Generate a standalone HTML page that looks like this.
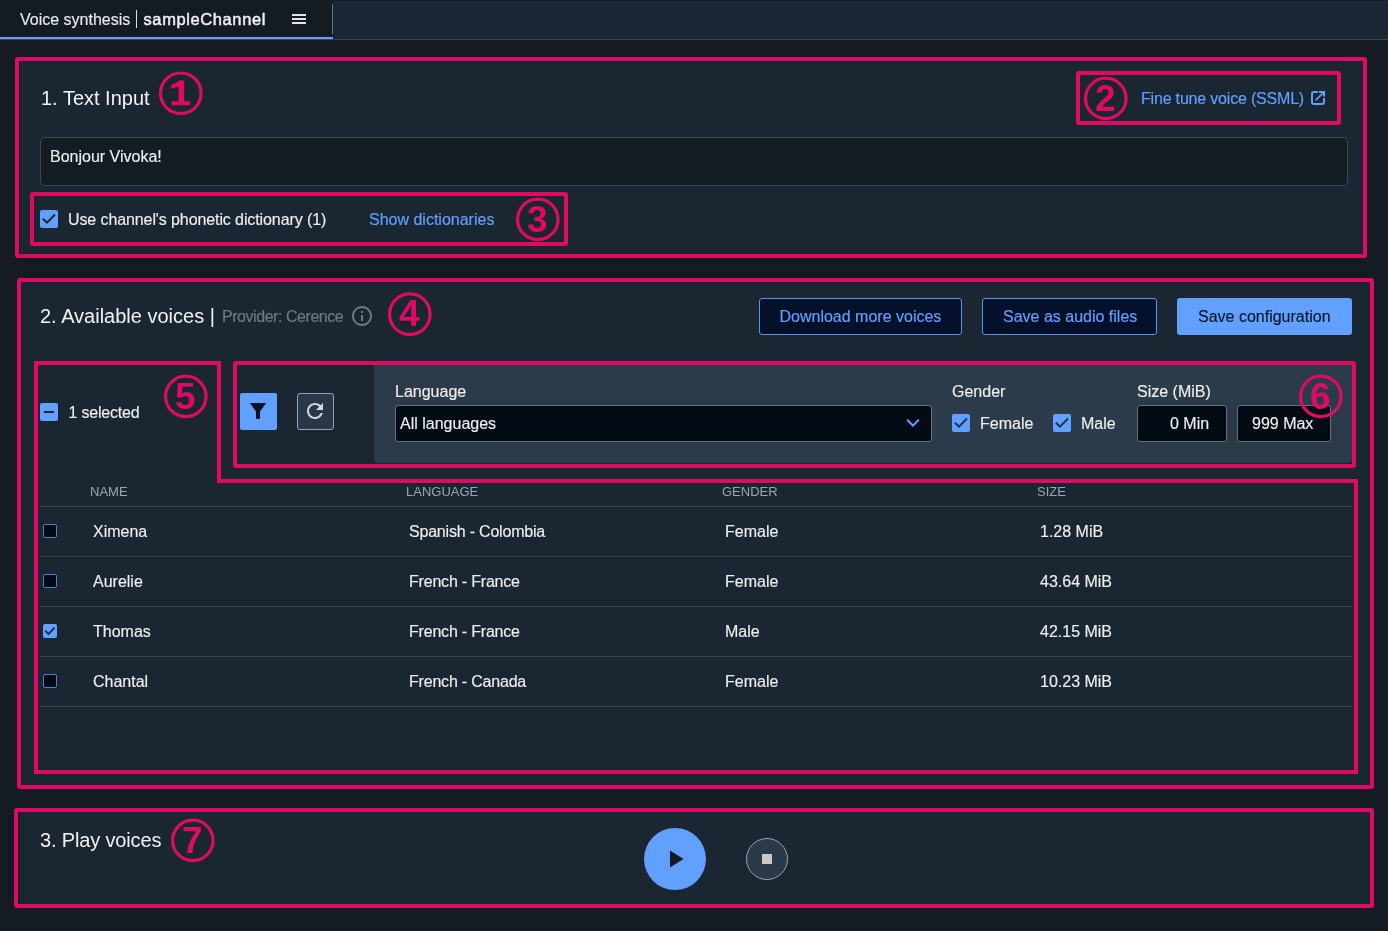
<!DOCTYPE html>
<html><head><meta charset="utf-8">
<style>
*{box-sizing:border-box;margin:0;padding:0}
html,body{width:1388px;height:931px;overflow:hidden;background:#141b23;font-family:"Liberation Sans",sans-serif;color:#eeeeee}
.a{position:absolute}
.t{position:absolute;white-space:nowrap;line-height:1;font-size:16px;-webkit-text-stroke:0.15px currentColor}
.t20{font-size:20px;color:#f2f2f2;-webkit-text-stroke:0}
.pk{position:absolute;border:4px solid #df0a64;border-radius:3px}
.panel{position:absolute;background:#1b2633}
.cb{position:absolute;width:18px;height:18px;background:#62a0ff;border-radius:2px}
.tcb{position:absolute;width:14px;height:14px;border:1.5px solid #4d7fcc;background:#030a12;border-radius:2px}
.tcbc{position:absolute;width:14px;height:14px;background:#62a0ff;border-radius:2px}
.div{position:absolute;left:40px;width:1312px;height:1px;background:#37434f}
.th{position:absolute;white-space:nowrap;line-height:1;font-size:13px;color:#9da6ae}
.num{position:absolute}
</style></head><body>
<div id="root" style="position:absolute;left:0;top:0;width:1388px;height:931px;will-change:transform">

<!-- top tab bar -->
<div class="a" style="left:333px;top:1px;width:1055px;height:38px;background:#1a2633"></div>
<div class="a" style="left:0;top:39px;width:1388px;height:1px;background:#3c4753"></div>
<div class="a" style="left:0;top:37px;width:333px;height:2px;background:#62a0ff"></div>
<div class="a" style="left:332px;top:4px;width:1px;height:30px;background:#6b7580"></div>
<div class="t" style="left:20px;top:12px;color:#e8e8e8">Voice synthesis</div>
<div class="a" style="left:136px;top:10px;width:1px;height:18px;background:#e0e0e0"></div>
<div class="t" style="left:143.5px;top:11.3px;font-size:16.5px;letter-spacing:0.6px;-webkit-text-stroke:0.45px #f2f2f2;color:#f2f2f2">sampleChannel</div>
<div class="a" style="left:292px;top:14px;width:14px;height:2px;background:#e4e4e4"></div>
<div class="a" style="left:292px;top:18px;width:14px;height:2px;background:#e4e4e4"></div>
<div class="a" style="left:292px;top:22px;width:14px;height:2px;background:#e4e4e4"></div>

<!-- SECTION 1 -->
<div class="panel" style="left:20px;top:57px;width:1347px;height:201px"></div>
<div class="t t20" style="left:41px;top:88px">1. Text Input</div>
<div class="t" style="left:1141px;top:91px;letter-spacing:-0.19px;color:#62a0ff">Fine tune voice (SSML)</div>
<svg class="a" style="left:1306px;top:86px" width="24" height="24"><path d="M12 6 H8 Q6 6 6 8 V16 Q6 18 8 18 H16 Q18 18 18 16 V12" fill="none" stroke="#62a0ff" stroke-width="2"/><path d="M13 5 H19 V10.6 H17 V7 H13 Z" fill="#62a0ff"/><path d="M18 6 L9.6 14.4" stroke="#62a0ff" stroke-width="1.7"/></svg>
<div class="a" style="left:40px;top:137px;width:1308px;height:49px;background:#131b23;border:1px solid #3c4856;border-radius:5px"></div>
<div class="t" style="left:50px;top:149px;color:#eeeeee">Bonjour Vivoka!</div>
<div class="cb" style="left:40px;top:210px"><svg width="18" height="18" class="a" style="left:0;top:0"><path d="M2.8 8.7 L7 12.6 L15 4.5" fill="none" stroke="#1b2633" stroke-width="2"/></svg></div>
<div class="t" style="left:68px;top:212px;letter-spacing:-0.1px">Use channel's phonetic dictionary (1)</div>
<div class="t" style="left:369px;top:212px;color:#62a0ff">Show dictionaries</div>

<!-- SECTION 2 -->
<div class="panel" style="left:20px;top:278px;width:1354px;height:511px"></div>
<div class="t t20" style="left:40px;top:306px">2. Available voices |</div>
<div class="t" style="left:222px;top:309px;letter-spacing:-0.45px;color:#6e7a86">Provider: Cerence</div>
<svg class="a" style="left:350px;top:304px" width="24" height="24" viewBox="0 0 24 24"><path fill="#6b7885" d="M11 7h2v2h-2zm0 4h2v6h-2zm1-9C6.48 2 2 6.48 2 12s4.48 10 10 10 10-4.48 10-10S17.52 2 12 2zm0 18c-4.41 0-8-3.59-8-8s3.59-8 8-8 8 3.59 8 8-3.59 8-8 8z"/></svg>

<div class="a" style="left:759px;top:298px;width:203px;height:37px;background:#05112a;border:1px solid #5a94ec;border-radius:3px"></div>
<div class="t" style="left:779.5px;top:309px;color:#62a0ff">Download more voices</div>
<div class="a" style="left:982px;top:298px;width:175px;height:37px;background:#05112a;border:1px solid #5a94ec;border-radius:3px"></div>
<div class="t" style="left:1003px;top:309px;color:#62a0ff">Save as audio files</div>
<div class="a" style="left:1177px;top:298px;width:175px;height:37px;background:#62a0ff;border-radius:3px"></div>
<div class="t" style="left:1198px;top:309px;color:#0b1726">Save configuration</div>

<!-- selection -->
<div class="cb" style="left:40px;top:403px"><div class="a" style="left:4px;top:8px;width:10px;height:2px;background:#1b2633"></div></div>
<div class="t" style="left:68.5px;top:405px;letter-spacing:-0.2px">1 selected</div>

<!-- filter -->
<div class="a" style="left:240px;top:393px;width:37px;height:37px;background:#62a0ff;border-radius:2px">
<svg class="a" style="left:0;top:0" width="37" height="37"><path fill="#06122a" d="M10.5 10 L25.5 10 Q26.2 10 25.8 10.6 L20 18.5 L20 25 Q20 26 19 26 L17 26 Q16 26 16 25 L16 18.5 L10.2 10.6 Q9.8 10 10.5 10 Z"/></svg></div>
<div class="a" style="left:297px;top:393px;width:37px;height:37px;background:#283848;border:1px solid #9aa4ae;border-radius:3px">
<svg class="a" style="left:5px;top:5px" width="24" height="24" viewBox="0 0 24 24"><path fill="#d8d8d8" d="M17.65 6.35C16.2 4.9 14.21 4 12 4c-4.42 0-7.99 3.58-7.99 8s3.57 8 7.99 8c3.73 0 6.84-2.55 7.730-6h-2.08c-.82 2.33-3.04 4-5.65 4-3.31 0-6-2.69-6-6s2.69-6 6-6c1.66 0 3.14.69 4.22 1.780L13 11h7V4l-2.35 2.35z"/></svg></div>
<div class="a" style="left:374px;top:365px;width:978px;height:98px;background:#2b3b4a;border-radius:0 0 4px 4px"></div>
<div class="t" style="left:395px;top:384px">Language</div>
<div class="a" style="left:395px;top:405px;width:537px;height:37px;background:#030b14;border:1px solid #66717b;border-radius:3px"></div>
<div class="t" style="left:400px;top:416px">All languages</div>
<svg class="a" style="left:905px;top:417px" width="16" height="12"><path d="M2.7 3.3 L8 8.6 L13.3 3.3" fill="none" stroke="#62a0ff" stroke-width="2" stroke-linecap="round"/></svg>
<div class="t" style="left:952px;top:384px">Gender</div>
<div class="cb" style="left:952px;top:414px"><svg width="18" height="18" class="a" style="left:0;top:0"><path d="M2.8 8.7 L7 12.6 L15 4.5" fill="none" stroke="#263442" stroke-width="2"/></svg></div>
<div class="t" style="left:980px;top:416px">Female</div>
<div class="cb" style="left:1053px;top:414px"><svg width="18" height="18" class="a" style="left:0;top:0"><path d="M2.8 8.7 L7 12.6 L15 4.5" fill="none" stroke="#263442" stroke-width="2"/></svg></div>
<div class="t" style="left:1081px;top:416px">Male</div>
<div class="t" style="left:1137px;top:384px">Size (MiB)</div>
<div class="a" style="left:1137px;top:405px;width:90px;height:37px;background:#030b14;border:1px solid #66717b;border-radius:3px"></div>
<div class="t" style="left:1170px;top:416px">0 Min</div>
<div class="a" style="left:1237px;top:405px;width:94px;height:37px;background:#030b14;border:1px solid #66717b;border-radius:3px"></div>
<div class="t" style="left:1252px;top:416px">999 Max</div>

<!-- table -->
<div class="th" style="left:90px;top:485px">NAME</div>
<div class="th" style="left:406px;top:485px">LANGUAGE</div>
<div class="th" style="left:722px;top:485px">GENDER</div>
<div class="th" style="left:1037px;top:485px">SIZE</div>
<div class="div" style="top:506px"></div>
<div class="div" style="top:556px"></div>
<div class="div" style="top:606px"></div>
<div class="div" style="top:656px"></div>
<div class="div" style="top:706px"></div>

<div class="tcb" style="left:43px;top:524px"></div>
<div class="t" style="left:93px;top:524px">Ximena</div>
<div class="t" style="left:409px;top:524px;letter-spacing:-0.2px">Spanish - Colombia</div>
<div class="t" style="left:725px;top:524px">Female</div>
<div class="t" style="left:1040px;top:524px">1.28 MiB</div>

<div class="tcb" style="left:43px;top:574px"></div>
<div class="t" style="left:93px;top:574px">Aurelie</div>
<div class="t" style="left:409px;top:574px;letter-spacing:-0.2px">French - France</div>
<div class="t" style="left:725px;top:574px">Female</div>
<div class="t" style="left:1040px;top:574px">43.64 MiB</div>

<div class="tcbc" style="left:43px;top:624px"><svg width="14" height="14" class="a" style="left:0;top:0"><path d="M2.3 6.6 L5.5 10.1 L11.6 3.7" fill="none" stroke="#1b2633" stroke-width="1.7"/></svg></div>
<div class="t" style="left:93px;top:624px">Thomas</div>
<div class="t" style="left:409px;top:624px;letter-spacing:-0.2px">French - France</div>
<div class="t" style="left:725px;top:624px">Male</div>
<div class="t" style="left:1040px;top:624px">42.15 MiB</div>

<div class="tcb" style="left:43px;top:674px"></div>
<div class="t" style="left:93px;top:674px">Chantal</div>
<div class="t" style="left:409px;top:674px;letter-spacing:-0.2px">French - Canada</div>
<div class="t" style="left:725px;top:674px">Female</div>
<div class="t" style="left:1040px;top:674px">10.23 MiB</div>

<!-- SECTION 3 -->
<div class="panel" style="left:20px;top:808px;width:1354px;height:100px"></div>
<div class="t t20" style="left:40px;top:830px;letter-spacing:-0.15px">3. Play voices</div>
<div class="a" style="left:644px;top:828px;width:62px;height:62px;border-radius:50%;background:#62a0ff"></div>
<svg class="a" style="left:644px;top:828px" width="62" height="62"><path d="M26 22.5 L39.5 31 L26 39.5 Z" fill="#111a22"/></svg>
<div class="a" style="left:746px;top:838px;width:42px;height:42px;border-radius:50%;background:#2a3a49;border:1px solid #9aa0a6"></div>
<div class="a" style="left:762px;top:854px;width:10px;height:10px;background:#c8c8c8"></div>

<!-- pink annotation boxes -->
<div class="pk" style="left:15px;top:57px;width:1352px;height:201px"></div>
<div class="pk" style="left:1076px;top:71px;width:265px;height:54px"></div>
<div class="pk" style="left:30px;top:192px;width:538px;height:54px"></div>
<div class="pk" style="left:17px;top:278px;width:1357px;height:511px"></div>
<div class="pk" style="left:233px;top:361px;width:1123px;height:107px"></div>
<svg class="a" style="left:0;top:0" width="1388" height="931"><path d="M36 363 L219 363 L219 481 L1356 481 L1356 772 L36 772 Z" fill="none" stroke="#df0a64" stroke-width="4" stroke-linejoin="miter"/></svg>
<div class="pk" style="left:14px;top:808px;width:1360px;height:100px"></div>

<!-- circled numbers -->
<svg class="a" style="left:0;top:0" width="1388" height="931">
<g fill="none" stroke="#df0a64" stroke-width="3.2">
<circle cx="180.8" cy="93.25" r="20.25"/>
<circle cx="1105.8" cy="98.4" r="20.25"/>
<circle cx="537.8" cy="219.4" r="20.25"/>
<circle cx="409.8" cy="314.2" r="20.25"/>
<circle cx="185.8" cy="396.4" r="20.25"/>
<circle cx="1320.8" cy="396.4" r="20.25"/>
<circle cx="192.8" cy="840.4" r="20.25"/>
</g>
<g fill="#df0a64" font-family="Liberation Sans" font-weight="700" font-size="37" text-anchor="middle">
<path d="M171.00 84.90 L177.00 82.50 L179.00 80.40 L184.20 80.40 L184.20 101.30 L190.10 101.30 L190.10 105.30 L171.50 105.30 L171.50 101.30 L178.60 101.30 L178.60 86.50 L171.30 88.70 Z"/>
<text x="1105.3" y="110.50">2</text>
<text x="537.3" y="231.50">3</text>
<text x="409.3" y="326.30">4</text>
<text x="185.3" y="408.50">5</text>
<text x="1320.3" y="408.50">6</text>
<text x="192.3" y="852.50">7</text>
</g>
</svg>
</div>
</body></html>
